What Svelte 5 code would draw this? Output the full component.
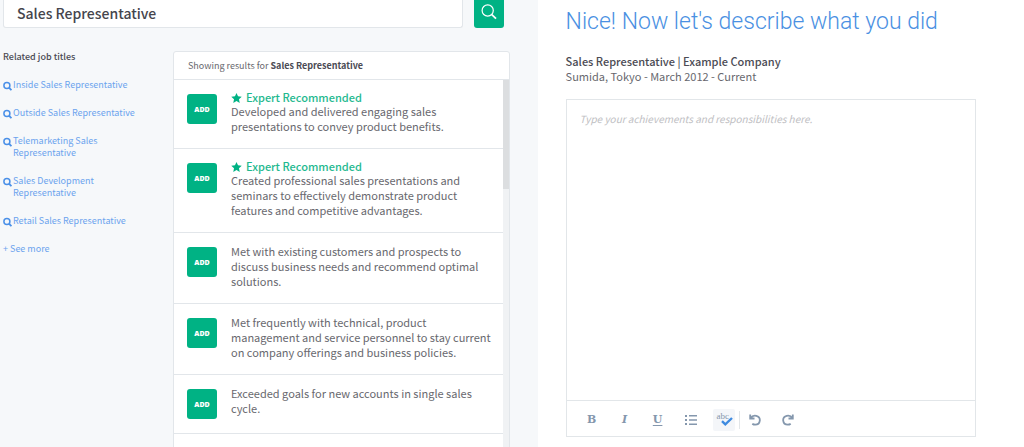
<script lang="ts">
  let query = 'Sales Representative';
  let description = '';
  let spellcheck = true;

  const relatedTitles = [
    'Inside Sales Representative',
    'Outside Sales Representative',
    'Telemarketing Sales Representative',
    'Sales Development Representative',
    'Retail Sales Representative'
  ];

  const examples = [
    { text: 'Developed and delivered engaging sales presentations to convey product benefits.', expert: true },
    { text: 'Created professional sales presentations and seminars to effectively demonstrate product features and competitive advantages.', expert: true },
    { text: 'Met with existing customers and prospects to discuss business needs and recommend optimal solutions.' },
    { text: 'Met frequently with technical, product management and service personnel to stay current on company offerings and business policies.' },
    { text: 'Exceeded goals for new accounts in single sales cycle.' },
    { text: 'Reached out to customers after completed sales to suggest additional service or product purchases.' }
  ];

  const addExample = (text) => {
    description = description ? `${description}\n${text}` : text;
  }
</script>


<div class="page">
  <section class="finder">
    <form class="search" on:submit|preventDefault>
      <input type="text" aria-label="Job title" bind:value={query} />
      <button type="submit" aria-label="Search">
        <svg width="16" height="16" viewBox="0 0 16 16" fill="none" stroke="currentColor" stroke-width="1.2">
          <circle cx="6.7" cy="6.5" r="5.6" />
          <path d="M10.8 10.6 15 14.7" stroke-width="1.7" />
        </svg>
      </button>
    </form>

    <div class="columns">
      <aside class="related">
        <h2>Related job titles</h2>
        <ul>
          {#each relatedTitles as title}
            <li>
              <a href="#related">
                <svg width="9" height="10" viewBox="0 0 9 10" fill="none" stroke="currentColor" stroke-width="1.5">
                  <circle cx="3.9" cy="4.4" r="3" />
                  <path d="M6 6.6 8.4 9.2" stroke-width="1.8" />
                </svg>
                <span>{title}</span>
              </a>
            </li>
          {/each}
        </ul>
        <a class="more" href="#more">+ See more</a>
      </aside>

      <div class="results">
        <p class="results-head">Showing results for <b>Sales Representative</b></p>
        <div class="results-body">
          <ul>
            {#each examples as example}
              <li>
                <button class="add" on:click={() => addExample(example.text)}>ADD</button>
                <div class="example">
                  {#if example.expert}
                    <strong>
                      <svg width="11" height="10" viewBox="0 0 22 21" fill="currentColor">
                        <path d="M11 0l3.2 7 7.8.9-5.8 5.2 1.6 7.7L11 17l-6.8 3.8 1.6-7.7L0 7.9l7.8-.9z" />
                      </svg>
                      Expert Recommended
                    </strong>
                  {/if}
                  <p>{example.text}</p>
                </div>
              </li>
            {/each}
          </ul>
          <div class="track"><div class="thumb"></div></div>
        </div>
      </div>
    </div>
  </section>

  <main class="editor">
    <h1>Nice! Now let's describe what you did</h1>
    <p class="job"><b>Sales Representative | Example Company</b></p>
    <p class="job">Sumida, Tokyo - March 2012 - Current</p>

    <div class="box">
      <textarea
        aria-label="Job description"
        placeholder="Type your achievements and responsibilities here."
        {spellcheck}
        bind:value={description}
      ></textarea>
      <div class="toolbar">
        <button class="bold" aria-label="Bold">B</button>
        <button class="italic" aria-label="Italic">I</button>
        <button class="underline" aria-label="Underline">U</button>
        <button aria-label="Bulleted list">
          <svg width="12" height="10" viewBox="0 0 12 10" fill="currentColor">
            <path d="M0 0h2v2H0zM0 4h2v2H0zM0 8h2v2H0zM4 0h8v1.6H4zM4 4.2h8v1.6H4zM4 8.4h8V10H4z" />
          </svg>
        </button>
        <button class="spell" class:active={spellcheck} aria-label="Spell check" on:click={() => spellcheck = !spellcheck}>
          <span>abc</span>
          <svg width="12" height="9" viewBox="0 0 12 9" fill="none" stroke="#3f8be0" stroke-width="2.4">
            <path d="M1 4.2 4.3 7.3 11 1" />
          </svg>
        </button>
        <span class="divider"></span>
        <button aria-label="Undo">
          <svg width="12" height="12" viewBox="0 0 12 12" fill="none" stroke="currentColor" stroke-width="1.8">
            <path d="M1.2 .5v4h4.3M1.5 4.3C3 1.9 5.2 1.3 7.3 1.8 9.6 2.3 11 4.3 10.8 6.6 10.5 9 8.6 10.7 6.3 10.7 5.2 10.7 4.2 10.4 3.3 9.7" />
          </svg>
        </button>
        <button aria-label="Redo">
          <svg width="12" height="12" viewBox="0 0 12 12" fill="none" stroke="currentColor" stroke-width="1.8">
            <path d="M10.8 .5v4H6.5M10.5 4.3C9 1.9 6.8 1.3 4.7 1.8 2.4 2.3 1 4.3 1.2 6.6 1.5 9 3.4 10.7 5.7 10.7 6.8 10.7 7.8 10.4 8.7 9.7" />
          </svg>
        </button>
      </div>
    </div>
  </main>
</div>


<style>
  :global(body) {
    margin: 0;
    background-color: #fff;
  }

  .page {
    display: flex;
    height: 100vh;
    overflow: hidden;
    font-family: "Source Sans Pro", "Noto Sans CJK JP", "Noto Sans", sans-serif;
    font-size: 11px;
    line-height: 15px;
    color: #68686e;
  }

  .page * {
    box-sizing: border-box;
  }

  h1, h2, p, ul {
    margin: 0;
    padding: 0;
    font-weight: normal;
  }

  ul {
    list-style: none;
  }

  button, input, textarea {
    font-family: inherit;
    margin: 0;
  }

  button {
    border: none;
    padding: 0;
    cursor: pointer;
  }

  b {
    color: #4b4b54;
  }

  .finder {
    flex: 0 0 52.5%;
    padding: 0 28px 0 3px;
    background-color: #f6f8fa;
  }

  .search {
    display: flex;
    gap: 11px;
    padding-right: 6px;
  }

  .search input {
    flex: 1;
    min-width: 0;
    height: 28px;
    padding: 0 13px 2px;
    border: 1px solid #e2e6ea;
    border-top: none;
    border-radius: 0 0 3px 3px;
    background-color: #fff;
    color: #45454d;
    font-size: 14px;
    font-weight: 500;
  }

  .search button {
    display: flex;
    align-items: center;
    justify-content: center;
    width: 30px;
    height: 28px;
    padding-bottom: 4px;
    border-radius: 0 0 3px 3px;
    background-color: #00b284;
    color: #fff;
  }

  .columns {
    display: flex;
    padding-top: 23px;
  }

  .related {
    flex: 0 0 170px;
    padding-right: 20px;
    font-size: 9px;
    line-height: 12px;
  }

  .related h2 {
    margin-bottom: 16px;
    font-size: 9px;
    font-weight: 500;
    color: #4b4b54;
  }

  .related li {
    margin-bottom: 16px;
  }

  .related a {
    color: #6ba3ee;
    text-decoration: none;
  }

  .related li a {
    display: flex;
    gap: 1px;
  }

  .related svg {
    flex: none;
    margin-top: 2px;
    color: #4a90e8;
  }

  .results {
    flex: 1;
    min-width: 0;
    border: 1px solid #e2e6ea;
    border-radius: 3px 3px 0 0;
    background-color: #fff;
  }

  .results-head {
    padding: 6px 14px;
    border-bottom: 1px solid #e2e6ea;
    font-size: 9px;
  }

  .results-body {
    display: flex;
  }

  .results-body ul {
    flex: 1;
    min-width: 0;
  }

  .results-body li {
    display: flex;
    gap: 14px;
    padding: 11px 8px 14px 13px;
    border-bottom: 1px solid #e2e6ea;
  }

  .add {
    flex: none;
    width: 30px;
    height: 30px;
    margin-top: 3px;
    border-radius: 3px;
    background-color: #00b284;
    color: #fff;
    font-family: "Open Sans", sans-serif;
    font-size: 7px;
    font-weight: 800;
  }

  .example strong {
    display: flex;
    align-items: center;
    gap: 4px;
    line-height: 13px;
    font-weight: 500;
    color: #1fb98f;
  }

  .example svg {
    color: #00b284;
  }

  .track {
    width: 6px;
    background-color: #f0f2f4;
  }

  .thumb {
    height: 109px;
    background-color: #dcdee0;
  }

  .editor {
    flex: 1;
    min-width: 0;
    display: flex;
    flex-direction: column;
    padding: 7px 48px 10px 28px;
  }

  h1 {
    margin-bottom: 17px;
    font-family: "Roboto Slab", Roboto, serif;
    font-size: 23px;
    font-weight: 300;
    line-height: 30px;
    color: #4a90e2;
  }

  .job b {
    font-weight: 500;
  }

  .box {
    flex: 1;
    display: flex;
    flex-direction: column;
    margin-top: 15px;
    border: 1px solid #e2e6e9;
  }

  textarea {
    flex: 1;
    padding: 11px 13px;
    border: none;
    resize: none;
    outline: none;
    font-size: 10px;
    line-height: 15px;
    color: #68686e;
  }

  textarea::placeholder {
    color: #c0c0c3;
    font-style: italic;
  }

  .toolbar {
    display: flex;
    align-items: center;
    gap: 11px;
    height: 36px;
    padding: 2px 14px 0;
    border-top: 1px solid #e2e6e9;
  }

  .toolbar button {
    display: flex;
    align-items: center;
    justify-content: center;
    width: 22px;
    height: 22px;
    border-radius: 2px;
    background: none;
    color: #8497ad;
    font-family: "DejaVu Serif", serif;
    font-size: 11px;
    line-height: 14px;
  }

  .toolbar .bold {
    font-weight: bold;
  }

  .toolbar .italic {
    font-weight: bold;
    font-style: italic;
  }

  .toolbar .underline {
    font-weight: bold;
    text-decoration: underline;
    text-underline-offset: 2px;
  }

  .toolbar .spell {
    position: relative;
    align-items: flex-start;
    justify-content: flex-start;
    padding: 0 4px;
    font-family: "Liberation Serif", serif;
    font-size: 9px;
  }

  .toolbar .spell.active {
    background-color: #f4f6f9;
  }

  .spell svg {
    position: absolute;
    right: 2px;
    bottom: 5px;
  }

  .divider {
    width: 1px;
    height: 18px;
    margin: 0 -7px;
    background-color: #e2e6e9;
  }
</style>
